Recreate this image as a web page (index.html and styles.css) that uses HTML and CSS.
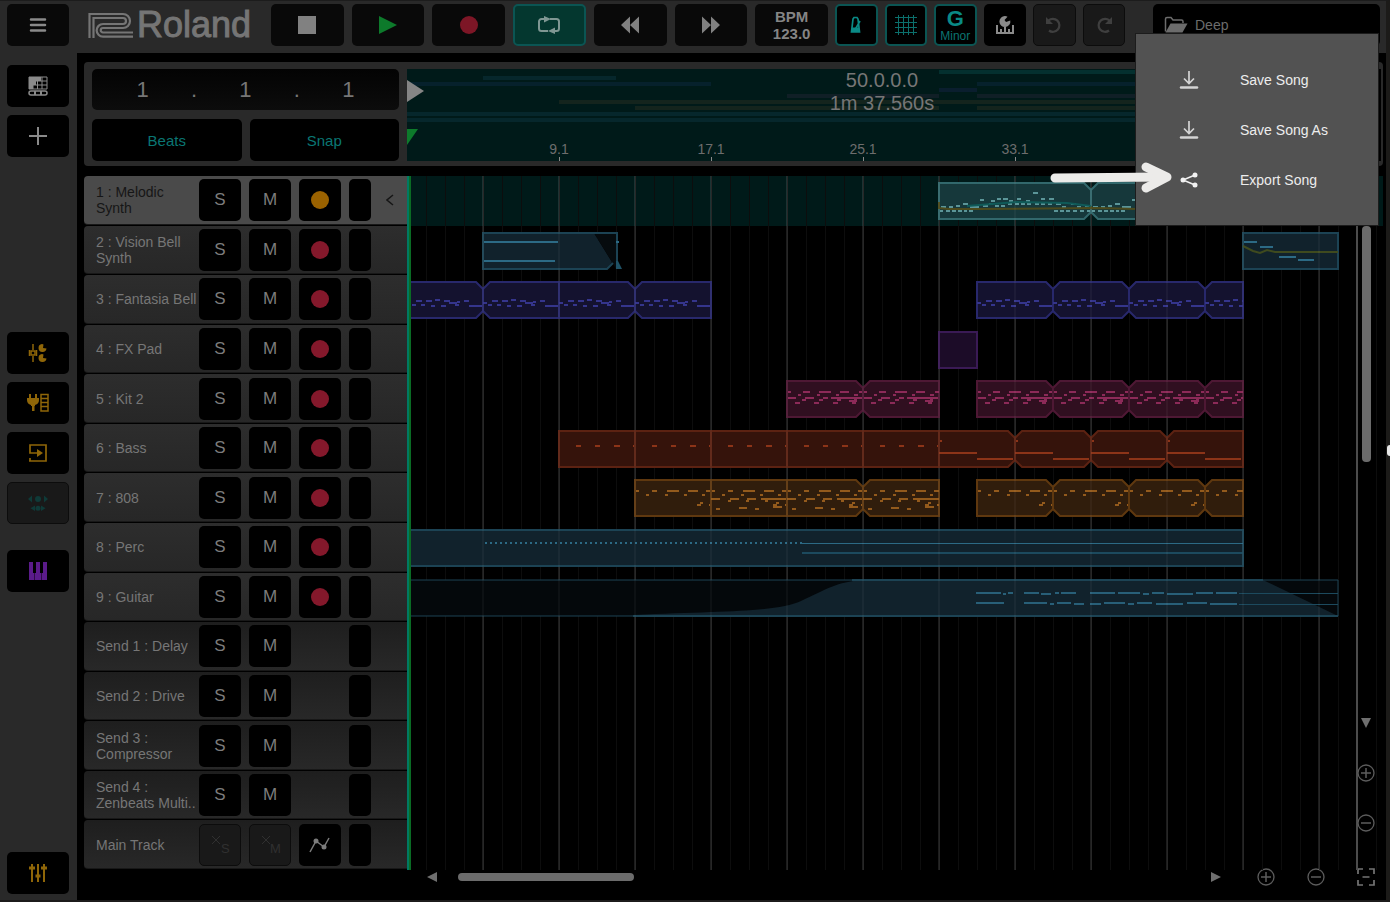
FILE: index.html
```
<!DOCTYPE html>
<html lang="en">
<head>
    <meta charset="UTF-8">
    <meta name="viewport" content="width=device-width, initial-scale=1.0">
    <title>Zenbeats - Deep</title>
    <link rel="stylesheet" href="styles.css">
</head>
<body>
    <header class="topbar">
        <button class="btn menu-btn" aria-label="Menu">
            <svg width="18" height="16" viewBox="0 0 18 16"><path d="M2 2.500H16M2 8H16M2 13.500H16" stroke="#8a8a8a" stroke-width="2.500" stroke-linecap="round"/></svg>
        </button>
        <div class="logo">
            <svg width="47" height="27" viewBox="0 0 47 27" fill="none" stroke="#757575" stroke-width="2.200">
                <path d="M1.500 26V2H35a7 7 0 0 1 0 14H15a2 2 0 0 0 0 4.500H45"/>
                <path d="M5.500 26V6H35a3 3 0 0 1 0 6H15a6.300 6.300 0 0 0 0 12.700H45"/>
            </svg>
            <span>Roland</span>
        </div>
        <div class="transport">
            <button class="btn" aria-label="Stop"><svg width="20" height="20"><path d="M1 1H19V19H1z" fill="#818181"/></svg></button>
            <button class="btn" aria-label="Play"><svg width="20" height="20"><path d="M1 1L19 10L1 19z" fill="#0d7a2b"/></svg></button>
            <button class="btn" aria-label="Record"><svg width="20" height="20"><circle cx="10" cy="10" r="9" fill="#7d1626"/></svg></button>
            <button class="btn loop" aria-label="Loop">
                <svg width="24" height="18" viewBox="0 0 24 18"><g fill="none" stroke="#7f9793" stroke-width="2"><path d="M7 3H4.500A2.500 2.500 0 0 0 2 5.500V12.500A2.500 2.500 0 0 0 4.500 15H11"/><path d="M13 3H19.500A2.500 2.500 0 0 1 22 5.500V12.500A2.500 2.500 0 0 1 19.500 15H17"/></g><path d="M7 0L14 3L7 6.500zM18 11.500L11 15L18 18z" fill="#7f9793"/></svg>
            </button>
            <button class="btn" aria-label="Rewind"><svg width="20" height="20"><path d="M10 1.500V18.500L1 10zM19 1.500V18.500L10 10z" fill="#818181"/></svg></button>
            <button class="btn" aria-label="Fast forward"><svg width="20" height="20"><path d="M1 1.500L10 10L1 18.500zM10 1.500L19 10L10 18.500z" fill="#818181"/></svg></button>
            <button class="btn bpm">BPM<br>123.0</button>
        </div>
        <div class="tools">
            <button class="btn on" aria-label="Metronome">
                <svg width="12" height="18" viewBox="0 0 12 18"><path d="M3 3L4 1.500H7L8 3L9.500 16H1.500zM5.500 13L10 5" fill="none" stroke="#0a8a86" stroke-width="1.700"/><path d="M2 11.500H9V16H1.500z" fill="#0a8a86"/></svg>
            </button>
            <button class="btn on" aria-label="Grid">
                <svg width="22" height="20" viewBox="0 0 22 20"><path d="M0 2.500H22M0 7.500H22M0 12.500H22M0 17.500H22M3.500 0V20M8.500 0V20M13.500 0V20M18.500 0V20" stroke="#0b6f6c" stroke-width="1"/></svg>
            </button>
            <button class="btn on key"><b>G</b>Minor</button>
            <button class="btn" aria-label="Scale tools">
                <svg width="20" height="20" viewBox="0 0 20 20"><path d="M2 10V18H18V10M6 18V14M10 18V12M14 18V14" fill="none" stroke="#8a8a8a" stroke-width="2"/><path d="M10 1a5.500 5.500 0 1 0 5.300 4.500L11 7L9.500 5L12.500 1.700A5.500 5.500 0 0 0 10 1z" fill="#8a8a8a"/></svg>
            </button>
            <button class="btn off" aria-label="Undo">
                <svg width="18" height="18" viewBox="0 0 18 18"><path d="M3.500 4.500A6.500 6.500 0 1 1 4 14.500" fill="none" stroke="#3f3f3f" stroke-width="2.200"/><path d="M1 1V8H8z" fill="#3f3f3f"/></svg>
            </button>
            <button class="btn off" aria-label="Redo">
                <svg width="18" height="18" viewBox="0 0 18 18"><path d="M14.500 4.500A6.500 6.500 0 1 0 14 14.500" fill="none" stroke="#3f3f3f" stroke-width="2.200"/><path d="M17 1V8H10z" fill="#3f3f3f"/></svg>
            </button>
        </div>
        <div class="song">
            <button class="btn song-btn">
                <svg width="24" height="18" viewBox="0 0 24 18"><path d="M1.500 15.500V3Q1.500 1.500 3 1.500H7L9 4H17.500Q19 4 19 5.500V7" fill="none" stroke="#6c6c6c" stroke-width="1.500"/><path d="M6.500 7.500H23.500L18.500 16.500H1.500z" fill="#6c6c6c"/></svg>
                Deep
            </button>
            <div class="song-menu">
                <button><svg width="20" height="20"><path d="M10 1V13M5 8.500L10 13.500L15 8.500" fill="none" stroke="#d4d4d4" stroke-width="1.700"/><path d="M2 17.500H18" stroke="#d4d4d4" stroke-width="2.500" stroke-linecap="round"/></svg>Save Song</button>
                <button><svg width="20" height="20"><path d="M10 1V13M5 8.500L10 13.500L15 8.500" fill="none" stroke="#d4d4d4" stroke-width="1.700"/><path d="M2 17.500H18" stroke="#d4d4d4" stroke-width="2.500" stroke-linecap="round"/></svg>Save Song As</button>
                <button><svg width="20" height="20"><path d="M16 5L4 10L16 15" fill="none" stroke="#f2f2f2" stroke-width="1.500"/><g fill="#f2f2f2"><circle cx="4" cy="10" r="2.500"/><circle cx="16" cy="5" r="2.500"/><circle cx="16" cy="15" r="2.500"/></g></svg>Export Song</button>
                <svg class="pointer" width="126" height="36" viewBox="0 0 126 36"><g fill="none" stroke="#ecebe9" stroke-width="9" stroke-linecap="round" stroke-linejoin="round"><path d="M7 18L116 17"/><path d="M98 7L119 17L98 28"/></g></svg>
            </div>
        </div>
    </header>

    <div class="workspace">
        <nav class="sidebar">
            <button class="btn" aria-label="Arranger">
                <svg width="20" height="20" viewBox="0 0 20 20"><path d="M1 1H13V5H8V9H5V13H1z" fill="#8a8a8a"/><path d="M1 1H19V13H1zM1 5H19M1 9H19M5 1V13M9.500 1V13M14 1V13" fill="none" stroke="#8a8a8a"/><rect x="1" y="15" width="18" height="4" rx="2" fill="none" stroke="#8a8a8a" stroke-width="1.500"/><path d="M7 15V19M13 15V19" stroke="#8a8a8a" stroke-width="2"/></svg>
            </button>
            <button class="btn" aria-label="Add">
                <svg width="20" height="20"><path d="M10 1V19M1 10H19" stroke="#8a8a8a" stroke-width="2"/></svg>
            </button>
            <div class="space-upper"></div>
            <button class="btn" aria-label="Instrument controls">
                <svg width="20" height="20" viewBox="0 0 20 20"><path d="M5 1V7M5 13V19M1.500 7V13M8.500 7V13" stroke="#8f6608" stroke-width="1.500"/><path d="M3 8H7V12H3z" fill="none" stroke="#8f6608" stroke-width="1.500"/><path d="M14 1a4 4 0 1 0 4.500 4.500L15 5L15.500 1.500zM14 11a4 4 0 1 0 4.500 4.500L15 15L15.500 11.500z" fill="#8f6608"/></svg>
            </button>
            <button class="btn" aria-label="Effects">
                <svg width="24" height="20" viewBox="0 0 24 20"><path d="M4 1V6M10 1V6" stroke="#8f6608" stroke-width="2"/><path d="M1 5H13V7Q13 11 9 12V13H8.500V18H6V13H5V12Q1 11 1 7z" fill="#8f6608"/><path d="M15 1.500H22V18H15zM15 5.500H22M15 9.500H22M15 13.500H22" fill="none" stroke="#8f6608" stroke-width="1.500"/></svg>
            </button>
            <button class="btn" aria-label="Clip editor">
                <svg width="20" height="20" viewBox="0 0 20 20"><path d="M2 7V2H18V18H1M2 6V10H10M2 15V18" fill="none" stroke="#8f6608" stroke-width="1.700"/><path d="M9 6L15 10L9 14z" fill="#8f6608"/></svg>
            </button>
            <button class="btn off" aria-label="Motion">
                <svg width="22" height="18" viewBox="0 0 22 18"><g fill="#0f3a38"><circle cx="11" cy="5" r="3"/><path d="M5 1.500V8.500L1 5zM17 1.500L21 5L17 8.500zM8 11.500V17L3.500 14.200zM14 11.500L18.500 14.200L14 17z"/><circle cx="11" cy="14.200" r="2.500"/></g></svg>
            </button>
            <div class="space-small"></div>
            <button class="btn" aria-label="Keyboard">
                <svg width="18" height="18" viewBox="0 0 18 18"><path d="M0 0H4V11H5.500V18H0zM7 0H11V11H12.500V18H6V11H7zM14 0H18V18H13V11H14z" fill="#5b1b8a"/></svg>
            </button>
            <div class="space-lower"></div>
            <button class="btn" aria-label="Mixer">
                <svg width="20" height="20" viewBox="0 0 20 20"><path d="M4 1V19M10 1V19M16 1V19" stroke="#8f6608" stroke-width="2"/><path d="M1 5H7M7.500 13H12.500M13 5H19" stroke="#8f6608" stroke-width="3"/></svg>
            </button>
        </nav>

        <main class="arranger">
            <section class="panel">
                <div class="controls">
                    <div class="position"><span>1</span><span>.</span><span>1</span><span>.</span><span>1</span></div>
                    <button class="btn teal">Beats</button>
                    <button class="btn teal">Snap</button>
                </div>
                <div class="overview">
                    <svg class="overview-map" id="overview"></svg>
                    <div class="length">50.0.0.0<br>1m 37.560s</div>
                </div>
            </section>

            <section class="tracks" id="tracks">
                <div class="playhead"></div>
                <div class="v-tools">
                    <div class="thumb"></div>
                    <button aria-label="Scroll down"><svg width="20" height="20"><path d="M5 5H15L10 15z" fill="#6f6f6f"/></svg></button>
                    <button aria-label="Zoom in vertically"><svg width="20" height="20"><path d="M10 5V15M5 10H15" stroke="#5c5c5c" stroke-width="1.500"/><circle cx="10" cy="10" r="8" fill="none" stroke="#5c5c5c" stroke-width="1.300"/></svg></button>
                    <button aria-label="Zoom out vertically"><svg width="20" height="20"><path d="M5 10H15" stroke="#5c5c5c" stroke-width="1.500"/><circle cx="10" cy="10" r="8" fill="none" stroke="#5c5c5c" stroke-width="1.300"/></svg></button>
                </div>
            </section>

            <footer class="h-tools">
                <button aria-label="Scroll left"><svg width="20" height="20"><path d="M15 5V15L5 10z" fill="#6f6f6f"/></svg></button>
                <div class="thumb"></div>
                <button class="push" aria-label="Scroll right"><svg width="20" height="20"><path d="M5 5V15L15 10z" fill="#6f6f6f"/></svg></button>
                <button aria-label="Zoom in"><svg width="20" height="20"><path d="M10 5V15M5 10H15" stroke="#5c5c5c" stroke-width="1.500"/><circle cx="10" cy="10" r="8" fill="none" stroke="#5c5c5c" stroke-width="1.300"/></svg></button>
                <button aria-label="Zoom out"><svg width="20" height="20"><path d="M5 10H15" stroke="#5c5c5c" stroke-width="1.500"/><circle cx="10" cy="10" r="8" fill="none" stroke="#5c5c5c" stroke-width="1.300"/></svg></button>
                <button aria-label="Zoom to fit"><svg width="20" height="20"><path d="M2 7V2H7M13 2H18V7M18 13V18H13M7 18H2V13M6.500 10H13.500" fill="none" stroke="#747474" stroke-width="1.700"/></svg></button>
            </footer>
        </main>
    </div>
    <div class="edge-handle"></div>

    <script src="script.js"></script>
</body>
</html>
```
FILE: styles.css
```
* {
    box-sizing: border-box;
}

body {
    margin: 0;
    height: 100vh;
    display: flex;
    flex-direction: column;
    background-color: #292929;
    border-right: 4px solid #1c1b19;
    border-bottom: 2px solid #1c1b1b;
    border-top: 1px solid #1c1c1c;
    font-family: "Liberation Sans", Arial, sans-serif;
    font-size: 14px;
    color: #767676;
    overflow: hidden;
}

svg {
    display: block;
    flex: none;
}

button {
    padding: 0;
    border: none;
    background: none;
    font: inherit;
    color: inherit;
    cursor: pointer;
    display: flex;
    align-items: center;
    justify-content: center;
}

.btn {
    height: 42px;
    background-color: #000;
    border-radius: 5px;
}

.btn.on {
    border: 2px solid #0b5553;
}

.btn.off {
    background-color: #191919;
    border: 1px solid #0c0c0c;
}

/* top bar */

.topbar {
    flex: none;
    display: flex;
    height: 52px;
    padding: 3px 6px 0 7px;
}

.menu-btn {
    width: 62px;
}

.topbar > .menu-btn,
.transport .btn {
    background-color: #090909;
}

.logo {
    display: flex;
    align-items: center;
    gap: 2px;
    width: 164px;
    height: 42px;
    margin: 0 19px;
    color: #757575;
}

.logo span {
    font-size: 36px;
    line-height: 42px;
    -webkit-text-stroke: 1px #757575;
}

.transport {
    display: grid;
    grid-template-columns: repeat(7, 1fr);
    gap: 8px;
    width: 557px;
}

.transport .loop {
    background-color: #04372f;
    border: 2px solid #0b5553;
}

.bpm {
    font-size: 15px;
    line-height: 17px;
    font-weight: bold;
    color: #858585;
}

.tools {
    display: grid;
    grid-template-columns: repeat(6, 1fr);
    gap: 7px;
    width: 290px;
    margin-left: 7px;
}

.btn.key {
    flex-direction: column;
    padding-top: 3px;
    font-size: 12px;
    line-height: 15px;
    color: #0b7471;
}

.key b {
    font-size: 22px;
    line-height: 20px;
    color: #0a8a86;
}

.song {
    flex: 1;
    position: relative;
    margin-left: 28px;
}

.song-btn {
    width: 100%;
    justify-content: flex-start;
    gap: 7px;
    padding-left: 11px;
    color: #6c6c6c;
}

.song-menu {
    position: absolute;
    z-index: 5;
    top: 29px;
    right: 1px;
    width: 244px;
    padding: 21px 0 20px;
    background-color: #525252;
    border: 1px solid #1c1c1c;
    color: #ededed;
}

.song-menu button {
    width: 100%;
    height: 50px;
    padding-left: 43px;
    gap: 41px;
    justify-content: flex-start;
}

.pointer {
    position: absolute;
    top: 126px;
    left: -88px;
}

/* sidebar */

.workspace {
    flex: 1;
    display: flex;
    min-height: 0;
}

.sidebar {
    width: 77px;
    padding: 12px 8px 6px 7px;
    display: flex;
    flex-direction: column;
    gap: 8px;
}

.sidebar .btn {
    flex: none;
}

.space-upper {
    flex: 13;
}

.space-small {
    height: 10px;
}

.space-lower {
    flex: 20;
}

/* arranger */

.arranger {
    flex: 1;
    min-width: 0;
    display: flex;
    flex-direction: column;
    padding: 9px 3px 0 7px;
    background-color: #000;
}

.panel {
    flex: none;
    display: flex;
    padding: 7px 2px 5px 8px;
    margin-bottom: 10px;
    background-color: #292929;
    border-radius: 4px;
}

.controls {
    width: 315px;
    padding-right: 8px;
    display: grid;
    grid-template-columns: 1fr 1fr;
    gap: 9px 8px;
}

.position {
    grid-column: span 2;
    height: 41px;
    display: grid;
    grid-template-columns: repeat(5, 1fr);
    align-items: center;
    justify-items: center;
    padding: 0 25px;
    background: linear-gradient(#030303, #0c0c0c);
    border-radius: 5px;
    font-size: 22px;
}

.teal {
    font-size: 15px;
    color: #0a7673;
}

.overview {
    flex: 1;
    position: relative;
    display: flex;
    background-color: #001a19;
    border-right: 4px solid #000;
    overflow: hidden;
}

.overview-map {
    width: 100%;
    height: 92px;
}

.overview-map text {
    font-size: 14px;
    fill: #6d6d6d;
    text-anchor: middle;
}

.length {
    position: absolute;
    top: 0;
    left: 0;
    width: 950px;
    text-align: center;
    font-size: 20px;
    line-height: 23px;
}

.tracks {
    flex: 1;
    min-height: 0;
    position: relative;
    display: grid;
    grid-template-rows: repeat(14, 1fr);
}

.track {
    display: flex;
    min-height: 0;
}

.head {
    flex: none;
    width: 323px;
    margin-bottom: 1px;
    padding: 1px 0 0 12px;
    display: grid;
    /* the name runs up to the solo button */
    grid-template-columns: 95px 42px 42px 42px 22px 1fr;
    column-gap: 8px;
    align-items: center;
    background: linear-gradient(#2d2d2d, #272727);
    border-bottom: 1px solid #181818;
    border-radius: 4px 0 0 4px;
}

.head .name {
    margin-right: -8px;
    line-height: 16px;
    overflow: hidden;
    white-space: pre;
}

.head .btn {
    font-size: 17px;
    color: #7c7c7c;
}

.head .btn.off svg {
    overflow: visible;
}

.head .btn.off text {
    font-size: 13px;
    fill: #303030;
}

.head .chevron {
    margin-left: 7px;
}

.meter {
    height: 42px;
    background-color: #000;
    border-radius: 5px;
}

.track.selected .head {
    background: #4a4a4a;
    color: #161616;
}

.track.send .head {
    background: linear-gradient(#1e1e1e, #282828);
}

.lane {
    flex: 1;
    min-width: 0;
    padding-top: 6px;
    overflow: hidden;
    /* thin line at every bar */
    background: repeating-linear-gradient(90deg, #0d0d0d 0 1px, transparent 1px 19px);
}

.track.selected .lane {
    background-color: #001a19;
}

.lane svg {
    width: 100%;
    height: 40px;
    overflow: visible;
}

.playhead {
    position: absolute;
    top: 0;
    bottom: 0;
    left: 323px;
    width: 4px;
    background-color: #0a6b24;
    border-left: 2px solid #007a62;
}

.v-tools {
    position: absolute;
    top: 50px;
    bottom: 0;
    right: 7px;
    width: 20px;
    padding-bottom: 37px;
    display: flex;
    flex-direction: column;
    align-items: center;
    gap: 30px;
}

.thumb {
    background-color: #6b6b6b;
    border-radius: 4px;
}

.v-tools .thumb {
    width: 9px;
    height: 236px;
    margin-bottom: auto;
}

.h-tools {
    flex: none;
    display: flex;
    align-items: center;
    gap: 30px;
    height: 30px;
    padding: 0 7px 16px 338px;
}

.h-tools .thumb {
    width: 176px;
    height: 8px;
    margin-left: -14px;
}

.push {
    margin-left: auto;
}

.edge-handle {
    position: absolute;
    top: 445px;
    right: 0;
    width: 3px;
    height: 11px;
    background-color: #e8e8e8;
    border-radius: 3px 0 0 3px;
}
```
FILE: script.js
```
const BAR = 19;      // px per bar
const CLIP_H = 36;

const COLORS = {
    teal:   { fill: '#16383b', line: '#32686c', note: '#5b9598' },
    blue:   { fill: '#11222c', line: '#1c4354', note: '#2c6a85' },
    indigo: { fill: '#14122f', line: '#28286c', note: '#35358c' },
    purple: { fill: '#1c0c28', line: '#3a1a55', note: '#3a1a55' },
    pink:   { fill: '#300f20', line: '#4e1834', note: '#8c2a58' },
    orange: { fill: '#35130b', line: '#5c2212', note: '#8c3418' },
    gold:   { fill: '#301d0c', line: '#5f380f', note: '#935a1c' },
};

// notes: [x, y, length] inside the clip
const FANTASIA = [[0,20,4],[5,22,4],[9,18,6],[14,22,4],[19,18,6],[24,23,4],[28,17,5],[34,23,5],[37,18,6],[42,20,8],[48,22,4],[50,19,3],[57,18,5],[62,23,13]];
const KIT = [[1,10,3],[16,10,7],[32,10,12],[53,10,9],[72,10,5],[11,13,3],[30,13,3],[49,13,3],[67,13,4],[1,16,8],[18,16,9],[36,16,5],[44,16,31],[15,18,4],[32,18,4],[50,18,4],[8,21,5],[27,21,5],[46,21,5],[62,19,8],[65,21,4],[67,17,3]];
const BASS = [[17,14,5],[36,14,5],[55,14,6],[74,14,2]];
const BASS_END = [[1,9,2],[0,21,38],[38,27,36]];
const DRUM = [[1,10,3],[17,10,5],[32,10,12],[53,10,10],[71,10,5],[11,14,3],[30,14,3],[49,14,3],[67,14,3],[65,22,3],[62,24,4],[74,24,2]];
const DRUM_FULL = DRUM.concat([[0,18,9],[19,18,9],[36,18,9],[50,18,26],[17,20,3],[35,20,3],[54,20,3],[5,28,4],[28,27,8],[44,28,4],[62,26,9]]);
const MELODIC = [[1,27,3],[7,27,4],[13,27,4],[19,27,4],[25,27,3],[30,27,4],[2,23,5],[10,23,4],[17,22,4],[24,20,5],[31,23,9],[41,16,4],[44,22,5],[50,20,4],[52,17,4],[56,22,4],[58,15,4],[64,15,5],[62,22,4],[69,20,4],[76,20,4],[70,17,4],[78,15,4],[82,20,4],[87,17,4],[88,20,4],[94,9,5],[96,20,4],[102,20,4],[102,15,4],[109,20,4],[110,15,5],[115,27,4],[117,20,5],[121,27,4],[123,23,4],[127,27,4],[132,20,5],[134,27,4],[138,23,4],[141,27,4],[146,22,4],[148,27,3]];

// [start bar, bars, notes, fade left, fade right]
const tracks = [
    { name: '1 : Melodic\nSynth', type: 'selected', color: 'teal', clips: [[28,8,MELODIC,0,1],[36,8,MELODIC,1,0]] },
    { name: '2 : Vision Bell\nSynth', color: 'blue' },
    { name: '3 : Fantasia Bell', color: 'indigo', clips: [[0,4,FANTASIA,0,1],[4,4,FANTASIA,1,0],[8,4,FANTASIA,0,1],[12,4,FANTASIA,1,0],[30,4,FANTASIA,0,1],[34,4,FANTASIA,1,1],[38,4,FANTASIA,1,1],[42,2,FANTASIA,1,0]] },
    { name: '4 : FX Pad', color: 'purple', clips: [[28,2,[],0,0]] },
    { name: '5 : Kit 2', color: 'pink', clips: [[20,4,KIT,0,1],[24,4,KIT,1,0],[30,4,KIT,0,1],[34,4,KIT,1,1],[38,4,KIT,1,1],[42,2,KIT,1,0]] },
    { name: '6 : Bass', color: 'orange', clips: [[8,4,BASS,0,0],[12,4,BASS,0,0],[16,4,BASS,0,0],[20,4,BASS,0,0],[24,4,BASS,0,0],[28,4,BASS_END,0,1],[32,4,BASS_END,1,1],[36,4,BASS_END,1,1],[40,4,BASS_END,1,0]] },
    { name: '7 : 808', color: 'gold', clips: [[12,4,DRUM,0,0],[16,4,DRUM_FULL,0,0],[20,4,DRUM_FULL,0,1],[24,4,DRUM_FULL,1,0],[30,4,DRUM,0,1],[34,4,DRUM,1,1],[38,4,DRUM,1,1],[42,2,DRUM,1,0]] },
    { name: '8 : Perc', color: 'blue' },
    { name: '9 : Guitar', color: 'blue' },
    { name: 'Send 1 : Delay', type: 'send' },
    { name: 'Send 2 : Drive', type: 'send' },
    { name: 'Send 3 :\nCompressor', type: 'send' },
    { name: 'Send 4 :\nZenbeats Multi..', type: 'send' },
    { name: 'Main Track', type: 'send', main: true },
];

function drawClip([start, bars, notes, left, right], c) {
    const x = start * BAR;
    const w = bars * BAR;
    const l = left ? 7 : 0;
    const r = right ? 7 : 0;
    const points = [[l,0],[w-r,0],[w,r],[w,CLIP_H-r],[w-r,CLIP_H],[l,CLIP_H],[0,CLIP_H-l],[0,l]].join(' ');
    const bits = notes.filter(n => n[0] < w)
        .map(n => `<rect x="${n[0]}" y="${n[1]}" width="${Math.min(n[2], w - n[0])}" height="2"/>`).join('');
    return `<g transform="translate(${x} 1)"><polygon points="${points}" fill="${c.fill}" stroke="${c.line}" stroke-width="2"/><g fill="${c.note}">${bits}</g></g>`;
}

function row(x1, x2, y, color, h = 2) {
    return `<rect x="${x1}" y="${y}" width="${x2 - x1}" height="${h}" fill="${color}"/>`;
}

// a heavier line every 4 bars
function barLines(opacity) {
    let d = '';
    for (let x = 76; x < 950; x += 76) d += `M${x} -7V50`;
    return `<path d="${d}" stroke="#fff" stroke-opacity="${opacity}" stroke-width="2"/>`;
}

// clips with automation or long fades are drawn by hand
function drawSpecial(index) {
    const c = COLORS.blue;
    if (index === 0) {
        return '<path d="M532 20V26L542 27H570L690 26L730 27H760M684 24V26" fill="none" stroke="#4c4a1c" stroke-width="2"/><path d="M560 24L610 20L660 21L684 24" fill="none" stroke="#0f5a58" stroke-width="2"/>';
    }
    if (index === 1) {
        let s = '<path d="M76 1H187L205 30L200 37H76z" fill="#11222c"/><path d="M187 1H209V37L205 30z" fill="#060b0e"/>';
        s += '<path d="M206 31L200 37H76V1H210V36" fill="none" stroke="#1c4354" stroke-width="2"/>';
        s += row(77, 151, 9, c.note) + row(77, 148, 28, c.note) + row(209, 212, 9, c.note);
        s += '<path d="M209 29H211L215 37H209z" fill="#1f5266"/>';
        s += drawClip([44, 5, [[1,8,13],[17,13,13],[36,23,17],[55,26,16]], 0, 0], c);
        s += '<path d="M836 14L846 19L853 21L860 18L868 20H931" fill="none" stroke="#3f4a1e" stroke-width="2"/>';
        return s;
    }
    if (index === 7) {
        let s = drawClip([0, 44, [], 0, 0], c);
        for (let x = 78; x < 394; x += 5) s += row(x, x + 2, 13, c.note, 2);
        return s + row(395, 836, 14, c.note, 1) + row(395, 836, 23, '#1c4a5e');
    }
    if (index === 8) {
        let s = '<path d="M0 1H931V37H0z" fill="#04080b"/>';
        s += '<path d="M226 36C320 32 370 33 394 22C420 10 430 3 455 1H856L931 37H226z" fill="#11222c"/>';
        s += '<path d="M0 1H931V37H0z" fill="none" stroke="#1c4354" stroke-width="1"/>';
        s += '<path d="M226 37H931M445 1H856" stroke="#1c4354" stroke-width="2"/>';
        s += row(832, 931, 14, '#1c4a5e', 1) + row(832, 931, 25, '#1c4a5e', 1);
        s += '<path d="M569 14H594M596 15H599M601 14H606M617 14H632M634 15H644M648 14H652M654 14H669M683 14H708M711 14H733M736 15H742M745 14H757M760 15H786M789 14H806M809 14H830M569 24H597M617 24H640M643 25H647M650 24H664M667 25H677M683 25H694M697 24H718M721 25H727M730 24H745M749 25H776M780 24H800M803 25H830" stroke="#285f78" stroke-width="2"/>';
        return s;
    }
    return '';
}

function trackButtons(t, i) {
    if (t.main) {
        return `<button class="btn off" aria-label="Clear solo"><svg width="20" height="22"><path d="M2 2L10 10M10 2L2 10" stroke="#303030"/><text x="11" y="19">S</text></svg></button>
            <button class="btn off" aria-label="Clear mute"><svg width="20" height="22"><path d="M2 2L10 10M10 2L2 10" stroke="#303030"/><text x="10" y="19">M</text></svg></button>
            <button class="btn" aria-label="Automation"><svg width="22" height="18"><path d="M1 16L7 5L15 11L20 2" fill="none" stroke="#7c7c7c" stroke-width="1.500"/><circle cx="7" cy="5" r="2.500" fill="#7c7c7c"/><circle cx="15" cy="11" r="2.500" fill="#7c7c7c"/></svg></button>`;
    }
    const rec = t.type === 'send' ? '<span></span>'
        : `<button class="btn" aria-label="Arm"><svg width="18" height="18"><circle cx="9" cy="9" r="9" fill="${i === 0 ? '#9a6200' : '#84182b'}"/></svg></button>`;
    return `<button class="btn">S</button><button class="btn">M</button>${rec}`;
}

document.getElementById('tracks').insertAdjacentHTML('afterbegin', tracks.map((t, i) => {
    const clips = (t.clips || []).map(c => drawClip(c, COLORS[t.color])).join('') + drawSpecial(i);
    // song end marker
    const end = i > 0 ? '<path d="M950 -7V50" stroke="#4c4c4c" stroke-width="2"/>' : '';
    const arrow = i === 0 ? '<svg class="chevron" width="8" height="12"><path d="M7 1L1 6L7 11" fill="none" stroke="#161616" stroke-width="1.500"/></svg>' : '';
    return `<div class="track ${t.type || ''}">
        <div class="head"><span class="name">${t.name}</span>${trackButtons(t, i)}<span class="meter"></span>${arrow}</div>
        <div class="lane"><svg>${barLines(0.08)}${clips}${barLines(0.04)}${end}</svg></div>
    </div>`;
}).join(''));

// overview strip: [from bar, to bar, row, color]
const strips = [
    [28,50,0,'#04302f'],[4,11,1,'#06272c'],[0,16,2,'#06212c'],[30,44,2,'#06212c'],[28,30,3,'#0a1e2e'],
    [20,28,4,'#101f26'],[30,44,4,'#101f26'],[8,44,5,'#14241d'],[12,28,6,'#14241d'],[30,44,6,'#14241d'],
    [0,44,7,'#06272c'],[0,49,8,'#06272c'],
];
let map = strips.map(([a, b, r, c]) => row(a * BAR, b * BAR, 1 + r * 6, c, 4)).join('');
for (const bar of [9, 17, 25, 33, 41]) {
    const x = (bar - 1) * BAR;
    map += `<text x="${x}" y="85">${bar}.1</text><rect x="${x}" y="88" width="1" height="4" fill="#8a8a8a"/>`;
}
map += '<path d="M0 11L17 22L0 33z" fill="#858585"/><path d="M0 60H11L0 76z" fill="#0d7a2b"/>';
document.getElementById('overview').innerHTML = map;
```
